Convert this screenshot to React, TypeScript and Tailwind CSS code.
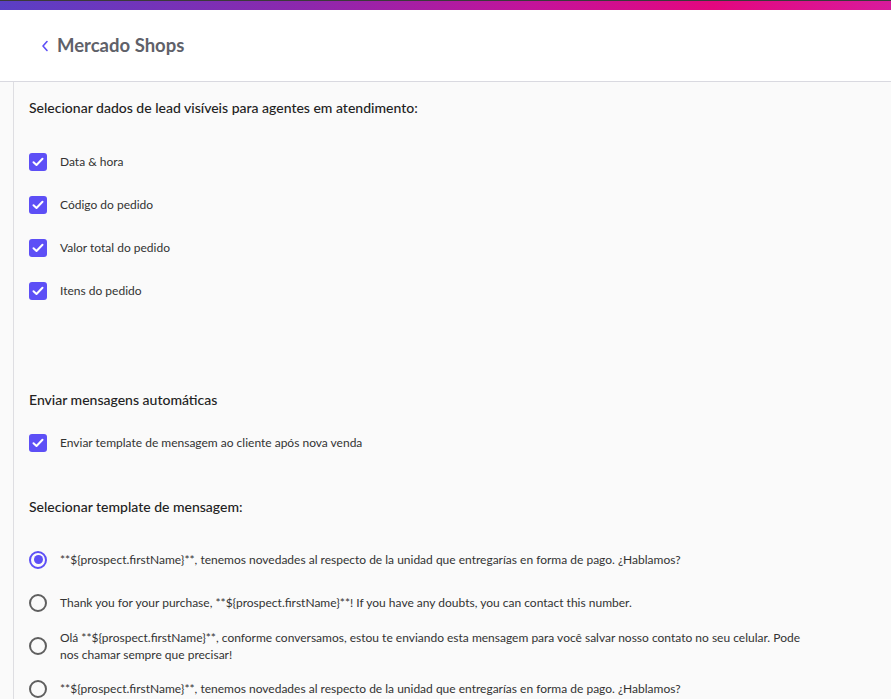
import React from "react";

const font = { fontFamily: 'Lato, "Noto Sans", sans-serif' };

function Check() {
  return (
    <span className="flex h-[18px] w-[18px] shrink-0 items-center justify-center rounded-[3px] bg-[#5d4ff6]">
      <svg width="12" height="10" viewBox="0 0 12 10" fill="none">
        <path d="M1.5 5.2 L4.5 8 L10.5 1.8" stroke="white" strokeWidth="2" strokeLinecap="round" strokeLinejoin="round" />
      </svg>
    </span>
  );
}

function Radio({ on }: { on?: boolean }) {
  return on ? (
    <span className="flex h-[18px] w-[18px] shrink-0 items-center justify-center rounded-full border-2 border-[#5d4ff6]">
      <span className="h-[9px] w-[9px] rounded-full bg-[#5d4ff6]" />
    </span>
  ) : (
    <span className="h-[18px] w-[18px] shrink-0 rounded-full border-2 border-[#5f5f5f]" />
  );
}

const checks = ["Data & hora", "Código do pedido", "Valor total do pedido", "Itens do pedido"];

const templates = [
  "**${prospect.firstName}**, tenemos novedades al respecto de la unidad que entregarías en forma de pago. ¿Hablamos?",
  "Thank you for your purchase, **${prospect.firstName}**! If you have any doubts, you can contact this number.",
  "Olá **${prospect.firstName}**, conforme conversamos, estou te enviando esta mensagem para você salvar nosso contato no seu celular. Pode nos chamar sempre que precisar!",
  "**${prospect.firstName}**, tenemos novedades al respecto de la unidad que entregarías en forma de pago. ¿Hablamos?",
];

export default function App() {
  return (
    <div className="h-[699px] w-[891px] overflow-hidden bg-[#fafafa]" style={font}>
      <div className="h-px bg-[#3a3a3a]" />
      <div className="h-[9px] bg-[linear-gradient(90deg,#5a3fc5_0%,#8e27ac_35%,#c4139a_60%,#e3077f_80%,#d81b9c_100%)]" />
      <div className="flex h-[72px] items-center border-b border-[#d9d9e0] bg-white pl-[40px]">
        <svg width="10" height="14" viewBox="0 0 10 14" fill="none" className="mr-[7px]">
          <path d="M7 2.5 L3 7 L7 11.5" stroke="#5d4ff6" strokeWidth="1.6" strokeLinecap="round" strokeLinejoin="round" />
        </svg>
        <span className="text-[18.5px] font-bold text-[#5f6169]">Mercado Shops</span>
      </div>
      <div className="ml-[13px] h-full border-l border-[#dedee2] pl-[15px]">
        <div className="pt-[16px] text-[14px] leading-[20px] font-medium text-[#222]">
          Selecionar dados de lead visíveis para agentes em atendimento:
        </div>
        <div className="mt-[22px] flex flex-col">
          {checks.map((c) => (
            <div key={c} className="flex h-[43px] items-center gap-[13px]">
              <Check />
              <span className="text-[12px] text-[#333]">{c}</span>
            </div>
          ))}
        </div>
        <div className="mt-[78px] text-[14px] leading-[20px] font-medium text-[#222]">Enviar mensagens automáticas</div>
        <div className="mt-[11px] flex h-[43px] items-center gap-[13px]">
          <Check />
          <span className="text-[12px] text-[#333]">Enviar template de mensagem ao cliente após nova venda</span>
        </div>
        <div className="mt-[33px] text-[14px] leading-[20px] font-medium text-[#222]">Selecionar template de mensagem:</div>
        <div className="mt-[21px] flex flex-col">
          {templates.map((t, i) => (
            <div key={i} className="flex h-[43px] items-center gap-[13px]">
              <Radio on={i === 0} />
              <span className="max-w-[745px] text-[12px] leading-[17px] text-[#333]">{t}</span>
            </div>
          ))}
        </div>
      </div>
    </div>
  );
}
